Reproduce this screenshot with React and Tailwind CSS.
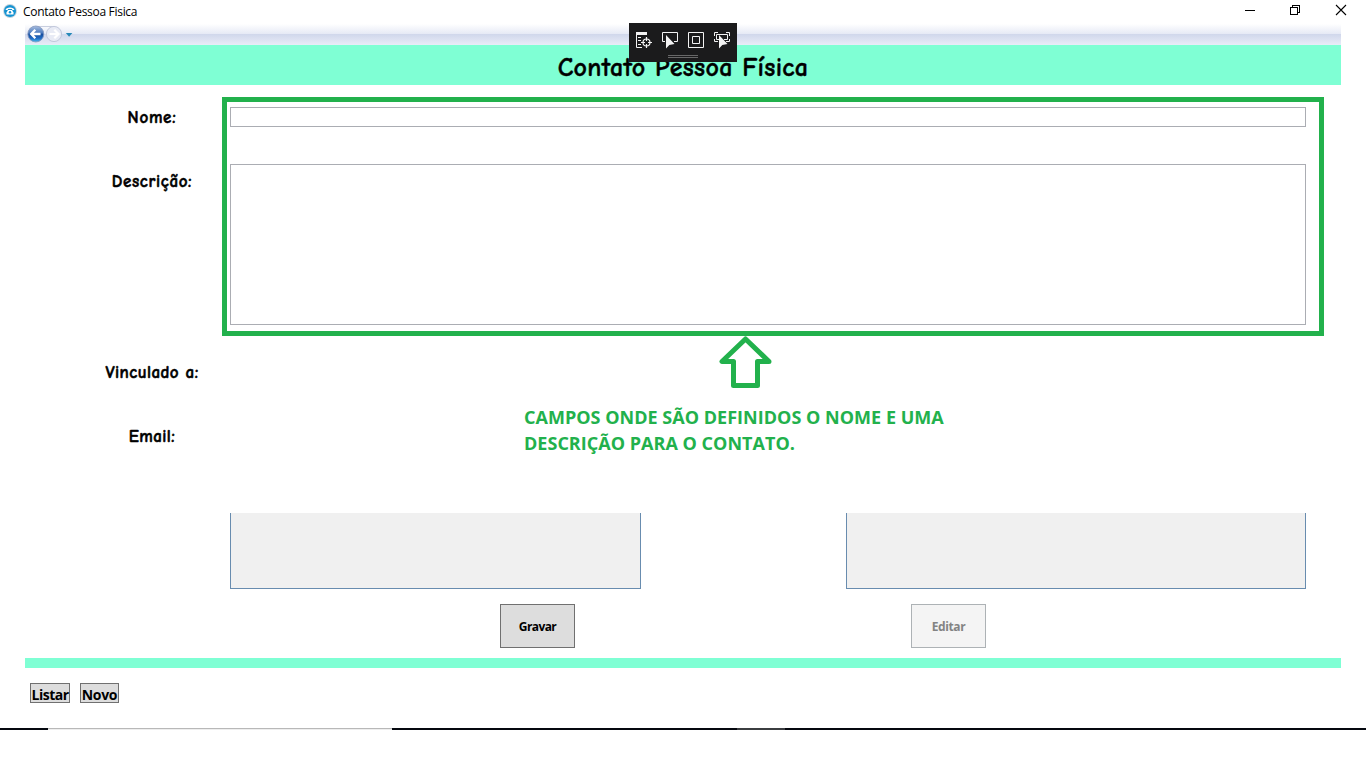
const labelFont = "font-['Comic_Sans_MS','Comic_Neue','Lato',sans-serif]";
const uiFont = "font-['Open_Sans',sans-serif]";

function PhoneIcon() {
  return (
    <svg width="14" height="14" viewBox="0 0 14 14">
      <circle cx="7" cy="7" r="6.9" fill="#c3d3dc" />
      <circle cx="7" cy="7" r="6" fill="#1593d2" />
      <path d="M2.600 6C2.600 2.600 11.400 2.600 11.400 6H9.300L8.900 4.900H5.100L4.700 6Z" fill="#fff" />
      <path d="M5 6h4l1.500 2.400v2.200H3.500v-2.200Z" fill="#fff" />
      <circle cx="7" cy="8.200" r="1.200" fill="#1593d2" />
    </svg>
  );
}

function NavButtons() {
  return (
    <svg width="50" height="21" viewBox="0 0 50 21">
      <defs>
        <linearGradient id="back" x1="0" y1="0" x2="0" y2="1">
          <stop offset="0" stopColor="#a9bedf" />
          <stop offset=".45" stopColor="#4777bd" />
          <stop offset=".5" stopColor="#164b9c" />
          <stop offset=".8" stopColor="#2270c8" />
          <stop offset="1" stopColor="#4fc1f1" />
        </linearGradient>
      </defs>
      <path d="M10 2.500H30" stroke="#c8cede" />
      <circle cx="10.800" cy="10" r="8" fill="url(#back)" stroke="#8598bd" strokeWidth=".8" />
      <path d="M15.500 10H6.500M10.300 5.800L6.200 10L10.300 14.200" fill="none" stroke="#fff" strokeWidth="2.300" />
      <circle cx="29" cy="10" r="7.600" fill="#e8ebf5" stroke="#c3c9dc" />
      <path d="M24.500 10H33M29.300 5.800L33.500 10L29.300 14.200" fill="none" stroke="#fff" strokeWidth="2.200" />
      <path d="M40.800 9h6.600l-3.300 3.800Z" fill="#2789b8" />
    </svg>
  );
}

function WindowButtons() {
  return (
    <svg width="126" height="22" viewBox="0 0 126 22" fill="none" stroke="#000" shapeRendering="crispEdges">
      <path d="M5 10.500H15" />
      <path d="M50.500 7.500H57.500V14.500H50.500Z M52.500 7V5.500H59.500V12.500H58" />
      <path d="M96 5L106 15M106 5L96 15" shapeRendering="auto" strokeWidth="1.100" />
    </svg>
  );
}

function DebugToolbar() {
  return (
    <div className="absolute left-[629px] top-[23px] h-[39px] w-[108px] bg-[#1b1b1c]">
      <svg width="108" height="39" viewBox="0 0 108 39" fill="none" stroke="#f3f3f3">
        <path d="M7 10.500H18" strokeWidth="3" />
        <path d="M7.500 10V24.500H13M9 14.500H12M9 17.500H12M9 21.500H12" />
        <circle cx="17.500" cy="19.500" r="3.500" strokeWidth="1.200" />
        <path d="M17.500 14V18M17.500 21V25M12 19.500H16M19 19.500H23" strokeWidth="1.200" />
        <path d="M36 18.500H33.500V9.500H48.500V18.500H45" />
        <path d="M37 12V25.500L40.300 22L45.500 21Z" fill="#f3f3f3" stroke="none" />
        <path d="M59.500 9.500H74.500V24.500H59.500Z M63.500 13.500H70.500V20.500H63.500Z" />
        <path d="M85.500 13V9.500H89M97 9.500H100.500V13M100.500 16V18.500H97M89 18.500H85.500V16M90 16.500H87.500V11.500H98.500V16.500H95" />
        <path d="M90 12V25.500L93.300 22L98.500 21Z" fill="#f3f3f3" stroke="none" />
        <path d="M39 32.500H69M39 34.500H69" stroke="#686868" />
      </svg>
    </div>
  );
}

function Label({ className, children }) {
  return (
    <div className={`flex h-6 items-center justify-center whitespace-nowrap text-[17px] font-black [-webkit-text-stroke:0.5px_#000] ${labelFont} ${className}`}>
      {children}
    </div>
  );
}

export default function App() {
  return (
    <div className={`relative flex h-[768px] w-[1366px] flex-col overflow-hidden bg-white text-black ${uiFont}`}>
      <header className="flex h-6 shrink-0 justify-between">
        <div className="flex items-center pl-[3px] pb-[2px]">
          <PhoneIcon />
          <span className="ml-[6px] pt-[2px] text-[12px] tracking-[-0.3px] whitespace-nowrap">Contato Pessoa Fisica</span>
        </div>
        <WindowButtons />
      </header>

      <div className="mx-[25px] flex h-[21px] shrink-0 bg-[linear-gradient(to_bottom,#ffffff_0%,#e5e9f5_48%,#d0d7eb_48%,#e9ecf8_100%)]">
        <NavButtons />
      </div>
      <h1 className={`mx-[25px] flex h-10 shrink-0 items-center justify-center bg-[#7fffd4] pt-[6px] text-[26px] font-bold tracking-[0.3px] [-webkit-text-stroke:0.4px_#000] ${labelFont}`}>
        Contato Pessoa Física
      </h1>

      <main className="flex h-[573px] shrink-0 pl-[25px]">
        <div className="flex w-[197px] flex-col pl-[57px] pt-[21px]">
          <Label className="tracking-[0.7px]">Nome:</Label>
          <Label className="mt-10 tracking-[0.65px]">Descrição:</Label>
          <Label className="mt-[167px] tracking-[0.45px]">Vinculado a:</Label>
          <Label className="mt-10 tracking-[0.45px]">Email:</Label>
        </div>

        <div className="flex w-[1102px] flex-col pt-3">
          <div className="flex h-[239px] flex-col border-5 border-[#22b14c] pl-[3px] pt-[5px]">
            <input className="h-5 w-[1076px] border border-[#abadb3] outline-none" />
            <textarea className="mt-[37px] h-[161px] w-[1076px] resize-none border border-[#abadb3] outline-none" />
          </div>
          <svg className="ml-[496px]" width="56" height="53" viewBox="0 0 56 53">
            <path d="M27.500 3L4 25.500H15.500V49.500H39.500V25.500H51Z" fill="#fff" stroke="#22b14c" strokeWidth="5" strokeLinejoin="round" />
          </svg>
          <p className="ml-[302px] mt-[15px] h-[53px] whitespace-nowrap text-[18px] font-bold leading-[26px] tracking-[0.02px] text-[#22b14c]">
            CAMPOS ONDE SÃO DEFINIDOS O NOME E UMA
            <br />
            DESCRIÇÃO PARA O CONTATO.
          </p>
          <div className="ml-2 mt-[56px] flex gap-[205px]">
            <div className="h-[76px] w-[411px] border border-t-0 border-[#688caf] bg-[#f0f0f0]" />
            <div className="h-[76px] w-[460px] border border-t-0 border-[#688caf] bg-[#f0f0f0]" />
          </div>
          <div className="ml-[278px] mt-[15px] flex gap-[336px] text-[12px] font-bold">
            <button className="h-11 w-[75px] border border-[#707070] bg-[#dddddd] pt-[2px] tracking-[-0.6px]">Gravar</button>
            <button className="h-11 w-[75px] border border-[#adb2b5] bg-[#f4f4f4] pt-[2px] tracking-[-0.4px] text-[#838383]">Editar</button>
          </div>
        </div>
      </main>

      <div className="mx-[25px] h-[10px] shrink-0 bg-[#7fffd4]" />
      <footer className="flex h-[60px] shrink-0 gap-[10px] pl-[30px] pt-[15px] text-[14px] font-bold">
        <button className="flex h-5 w-10 items-center justify-center border border-[#707070] bg-[#dddddd] pt-[2px] tracking-[-0.5px]">Listar</button>
        <button className="flex h-5 w-[39px] items-center justify-center border border-[#707070] bg-[#dddddd] pt-[2px] tracking-[-0.3px]">Novo</button>
      </footer>
      <div className="flex h-[2px] shrink-0 bg-[#05080f]">
        <div className="ml-12 w-[344px] border-t border-[#b8b8b8] bg-[#eeeeee]" />
        <div className="ml-[345px] w-12 bg-[#3b3d40]" />
      </div>

      <DebugToolbar />
    </div>
  );
}
